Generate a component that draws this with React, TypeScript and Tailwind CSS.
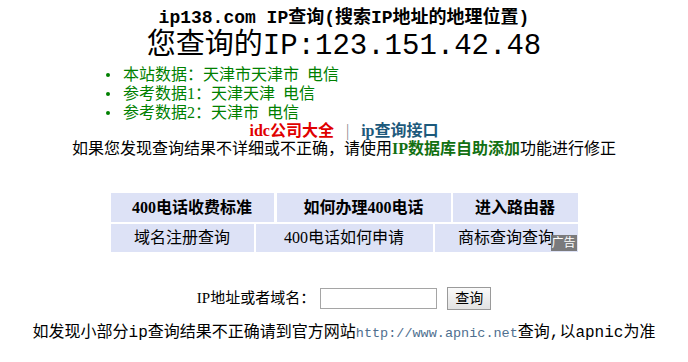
import { Fragment } from 'react';

const bullets = [
  '本站数据：天津市天津市\u00a0\u00a0电信',
  '参考数据1：天津天津\u00a0\u00a0电信',
  '参考数据2：天津市\u00a0\u00a0电信',
];

const rowA = [
  { label: '400电话收费标准', w: 'w-[163px]' },
  { label: '如何办理400电话', w: 'w-[174px]' },
  { label: '进入路由器', w: 'w-[125px]' },
];

const rowB = [
  { label: '域名注册查询', w: 'w-[143px]' },
  { label: '400电话如何申请', w: 'w-[177px]' },
  { label: '商标查询查询', w: 'w-[143px]' },
];

const body = "font-['Liberation_Serif','Noto_Sans_CJK_SC',serif]";
const mono = "font-['Liberation_Mono','Noto_Sans_CJK_SC',monospace]";

export default function App() {
  return (
    <div className={`w-[688px] h-[362px] bg-white text-black flex flex-col items-center ${body}`}>
      <div className={`pt-[8px] text-[18px] leading-[20px] font-bold ${mono}`}>
        ip138.com IP查询(搜索IP地址的地理位置)
      </div>
      <div className={`mt-[4px] text-[29px] leading-[30px] ${mono}`}>您查询的IP:123.151.42.48</div>

      <ul className="self-start mt-[3px] pl-[106px] text-[16px] leading-[19px] text-[#008000]">
        {bullets.map((b) => (
          <li key={b} className="flex items-center gap-[13px]">
            <span className="w-[4px] h-[4px] rounded-full bg-[#008000]" />
            <span>{b}</span>
          </li>
        ))}
      </ul>

      <div className="text-[16px] leading-[17px] font-bold flex items-center gap-[12px]">
        <span className="text-[#e00000]">idc公司大全</span>
        <span className="font-normal text-[#8a8a8a]">|</span>
        <span className="text-[#1d5a7c]">ip查询接口</span>
      </div>
      <div className="text-[16px] leading-[19px]">
        如果您发现查询结果不详细或不正确，请使用
        <span className="font-bold text-[#127012]">IP数据库自助添加</span>
        功能进行修正
      </div>

      <div className="relative mt-[35px] w-[467px] flex flex-col gap-[2px] text-[16px]">
        <div className="flex gap-[2px] font-bold">
          {rowA.map((c, i) => (
            <Fragment key={c.label}>
              <div className={`${c.w} ${i === 0 ? 'mr-[1px]' : ''} h-[29px] bg-[#dde2f6] flex items-center justify-center`}>
                {c.label}
              </div>
            </Fragment>
          ))}
        </div>
        <div className="flex gap-[2px]">
          {rowB.map((c) => (
            <div key={c.label} className={`${c.w} h-[28px] bg-[#dde2f6] flex items-center justify-center`}>
              {c.label}
            </div>
          ))}
        </div>
        <span className="absolute right-[1px] bottom-[1px] w-[26px] h-[16px] bg-[#6f6f6f]/90 text-white text-[12px] leading-[16px] text-center">
          广告
        </span>
      </div>

      <div className="mt-[35px] flex items-center text-[15px] h-[23px]">
        <span>IP地址或者域名：</span>
        <input className="ml-[5px] w-[117px] h-[21px] border border-[#a5a5a5] bg-white outline-none" />
        <button className="ml-[10px] w-[44px] h-[23px] border border-[#9a9a9a] bg-gradient-to-b from-[#fafafa] to-[#e2e2e2] text-[14px] leading-[20px]">
          查询
        </button>
      </div>

      <div className={`mt-[13px] text-[16px] leading-[20px] whitespace-nowrap ${mono}`}>
        如发现小部分ip查询结果不正确请到官方网站
        <span className="text-[13.5px] text-[#4f6f8f]">http://www.apnic.net</span>
        查询,以apnic为准
      </div>
    </div>
  );
}
